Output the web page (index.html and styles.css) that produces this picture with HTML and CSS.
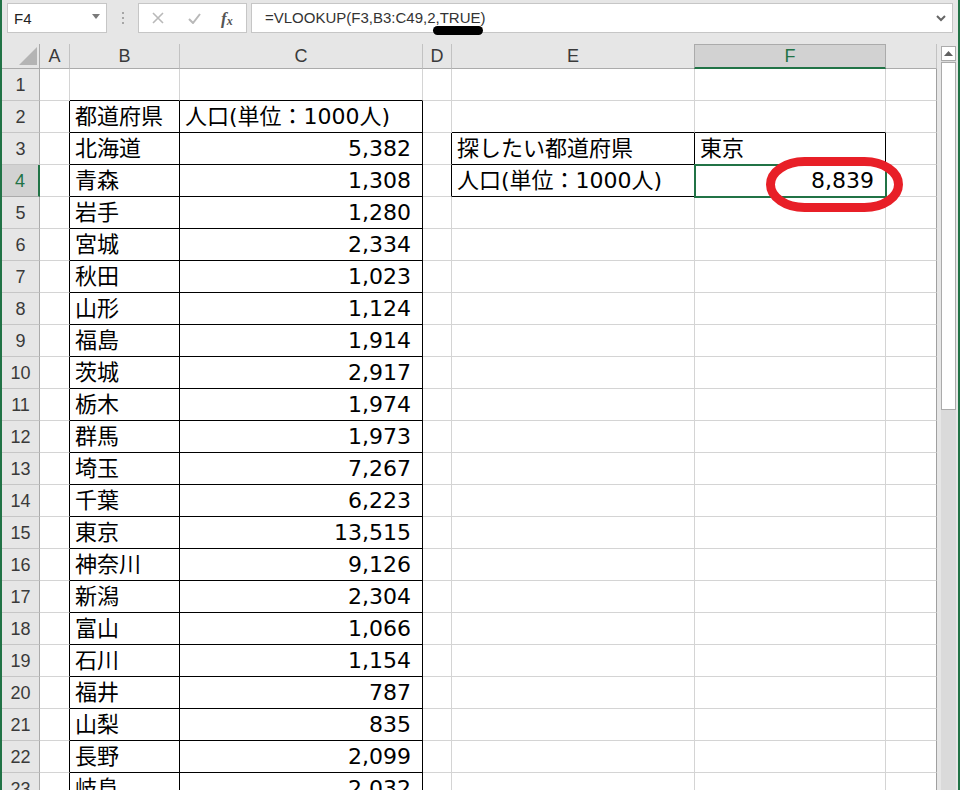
FILE: index.html
```html
<!DOCTYPE html>
<html lang="ja">
<head>
<meta charset="utf-8">
<title>VLOOKUP</title>
<link rel="stylesheet" href="styles.css">
</head>
<body>
<div class="app">
  <div class="topbar">
    <div class="namebox"><span class="nb-text">F4</span><svg class="nb-arrow" width="8" height="5" viewBox="0 0 8 5"><path d="M0 0h8L4 5z" fill="#7a7a7a"/></svg></div>
    <div class="dots"><i></i><i></i><i></i></div>
    <div class="fxbox">
      <svg class="ico" width="12" height="12" viewBox="0 0 12 12"><path d="M1 1l10 10M11 1L1 11" stroke="#b9b9b9" stroke-width="1.6"/></svg>
      <svg class="ico" width="13" height="11" viewBox="0 0 13 11"><path d="M1 6l4 4 7-9" stroke="#b9b9b9" stroke-width="2" fill="none"/></svg>
      <span class="fx">f<sub>x</sub></span>
    </div>
    <div class="formula"><span class="ftext">=VLOOKUP(F3,B3:C49,2,TRUE)</span><svg class="chev" width="10" height="7" viewBox="0 0 10 7"><path d="M1 1l4 4 4-4" stroke="#666" stroke-width="2" fill="none"/></svg></div>
  </div>
  <div class="sheet">
    <div class="grid">
      <div class="corner"><svg width="18" height="18" viewBox="0 0 18 18"><path d="M18 0V18H0z" fill="#b4b4b4"/></svg></div>
      <div class="ch">A</div><div class="ch">B</div><div class="ch">C</div><div class="ch">D</div><div class="ch">E</div><div class="ch sel">F</div><div class="ch"></div>

      <div class="rh">1</div><div class="c"></div><div class="c kb"></div><div class="c kb"></div><div class="c"></div><div class="c"></div><div class="c"></div><div class="c g"></div>
      <div class="rh">2</div><div class="c kr"></div><div class="c kr kb">都道府県</div><div class="c kr kb">人口(単位：1000人)</div><div class="c"></div><div class="c kb"></div><div class="c kb"></div><div class="c g"></div>
      <div class="rh">3</div><div class="c kr"></div><div class="c kr kb">北海道</div><div class="c kr kb num">5,382</div><div class="c kr"></div><div class="c kr kb">探したい都道府県</div><div class="c kr kb">東京</div><div class="c g"></div>
      <div class="rh rsel">4</div><div class="c kr"></div><div class="c kr kb">青森</div><div class="c kr kb num">1,308</div><div class="c kr"></div><div class="c kr kb">人口(単位：1000人)</div><div class="c kr kb num active">8,839<span class="selbox"></span></div><div class="c g"></div>
      <div class="rh">5</div><div class="c kr"></div><div class="c kr kb">岩手</div><div class="c kr kb num">1,280</div><div class="c"></div><div class="c"></div><div class="c"></div><div class="c g"></div>
      <div class="rh">6</div><div class="c kr"></div><div class="c kr kb">宮城</div><div class="c kr kb num">2,334</div><div class="c"></div><div class="c"></div><div class="c"></div><div class="c g"></div>
      <div class="rh">7</div><div class="c kr"></div><div class="c kr kb">秋田</div><div class="c kr kb num">1,023</div><div class="c"></div><div class="c"></div><div class="c"></div><div class="c g"></div>
      <div class="rh">8</div><div class="c kr"></div><div class="c kr kb">山形</div><div class="c kr kb num">1,124</div><div class="c"></div><div class="c"></div><div class="c"></div><div class="c g"></div>
      <div class="rh">9</div><div class="c kr"></div><div class="c kr kb">福島</div><div class="c kr kb num">1,914</div><div class="c"></div><div class="c"></div><div class="c"></div><div class="c g"></div>
      <div class="rh">10</div><div class="c kr"></div><div class="c kr kb">茨城</div><div class="c kr kb num">2,917</div><div class="c"></div><div class="c"></div><div class="c"></div><div class="c g"></div>
      <div class="rh">11</div><div class="c kr"></div><div class="c kr kb">栃木</div><div class="c kr kb num">1,974</div><div class="c"></div><div class="c"></div><div class="c"></div><div class="c g"></div>
      <div class="rh">12</div><div class="c kr"></div><div class="c kr kb">群馬</div><div class="c kr kb num">1,973</div><div class="c"></div><div class="c"></div><div class="c"></div><div class="c g"></div>
      <div class="rh">13</div><div class="c kr"></div><div class="c kr kb">埼玉</div><div class="c kr kb num">7,267</div><div class="c"></div><div class="c"></div><div class="c"></div><div class="c g"></div>
      <div class="rh">14</div><div class="c kr"></div><div class="c kr kb">千葉</div><div class="c kr kb num">6,223</div><div class="c"></div><div class="c"></div><div class="c"></div><div class="c g"></div>
      <div class="rh">15</div><div class="c kr"></div><div class="c kr kb">東京</div><div class="c kr kb num">13,515</div><div class="c"></div><div class="c"></div><div class="c"></div><div class="c g"></div>
      <div class="rh">16</div><div class="c kr"></div><div class="c kr kb">神奈川</div><div class="c kr kb num">9,126</div><div class="c"></div><div class="c"></div><div class="c"></div><div class="c g"></div>
      <div class="rh">17</div><div class="c kr"></div><div class="c kr kb">新潟</div><div class="c kr kb num">2,304</div><div class="c"></div><div class="c"></div><div class="c"></div><div class="c g"></div>
      <div class="rh">18</div><div class="c kr"></div><div class="c kr kb">富山</div><div class="c kr kb num">1,066</div><div class="c"></div><div class="c"></div><div class="c"></div><div class="c g"></div>
      <div class="rh">19</div><div class="c kr"></div><div class="c kr kb">石川</div><div class="c kr kb num">1,154</div><div class="c"></div><div class="c"></div><div class="c"></div><div class="c g"></div>
      <div class="rh">20</div><div class="c kr"></div><div class="c kr kb">福井</div><div class="c kr kb num">787</div><div class="c"></div><div class="c"></div><div class="c"></div><div class="c g"></div>
      <div class="rh">21</div><div class="c kr"></div><div class="c kr kb">山梨</div><div class="c kr kb num">835</div><div class="c"></div><div class="c"></div><div class="c"></div><div class="c g"></div>
      <div class="rh">22</div><div class="c kr"></div><div class="c kr kb">長野</div><div class="c kr kb num">2,099</div><div class="c"></div><div class="c"></div><div class="c"></div><div class="c g"></div>
      <div class="rh">23</div><div class="c kr"></div><div class="c kr kb">岐阜</div><div class="c kr kb num">2,032</div><div class="c"></div><div class="c"></div><div class="c"></div><div class="c g"></div>
    </div>
    <div class="vscroll">
      <div class="track">
        <div class="sbtn"><svg width="9" height="5" viewBox="0 0 9 5"><path d="M0 5L4.5 0 9 5z" fill="#606060"/></svg></div>
        <div class="thumb"></div>
      </div>
    </div>
  </div>
  <div class="blob"></div>
  <svg class="ring" width="137" height="55" viewBox="0 0 137 55"><rect x="4.5" y="4.5" width="128" height="46" rx="34" ry="23" fill="none" stroke="#e81f27" stroke-width="9"/></svg>
</div>
</body>
</html>
```

FILE: styles.css
```css
html, body {
  margin: 0;
  padding: 0;
}
body {
  width: 960px;
  height: 790px;
  overflow: hidden;
  background: #e6e6e6;
}
.app {
  position: relative;
  width: 960px;
  height: 790px;
  box-sizing: border-box;
  border-left: 2px solid #217346;
  border-right: 2px solid #217346;
  background: #e6e6e6;
  overflow: hidden;
}
.topbar {
  height: 44px;
  display: flex;
  align-items: flex-start;
  padding-top: 3px;
  box-sizing: border-box;
  font-family: "Liberation Sans", Arial, sans-serif;
}
.namebox {
  margin-left: 5px;
  width: 100px;
  height: 30px;
  box-sizing: border-box;
  background: #fff;
  border: 1px solid #c6c6c6;
  display: flex;
  align-items: center;
  justify-content: space-between;
  padding: 0 6px 0 6px;
}
.nb-text {
  font-size: 15px;
  color: #222;
}
.nb-arrow {
  margin-bottom: 3px;
}
.dots {
  width: 31px;
  height: 30px;
  display: flex;
  flex-direction: column;
  align-items: center;
  justify-content: center;
  gap: 3px;
}
.dots i {
  display: block;
  width: 2px;
  height: 2px;
  background: #a6a6a6;
}
.fxbox {
  width: 109px;
  height: 30px;
  box-sizing: border-box;
  background: #fff;
  border: 1px solid #c6c6c6;
  display: flex;
  align-items: center;
  padding-left: 13px;
  gap: 0;
}
.fxbox .ico:first-child {
  margin-right: 24px;
}
.fxbox .ico:nth-child(2) {
  margin-right: 20px;
}
.fx {
  font-family: "Liberation Serif", serif;
  font-style: italic;
  font-weight: bold;
  font-size: 17px;
  color: #555;
  line-height: 1;
}
.fx sub {
  font-size: 12px;
  vertical-align: -1px;
}
.formula {
  margin-left: 4px;
  width: 702px;
  height: 30px;
  box-sizing: border-box;
  background: #fff;
  border: 1px solid #c6c6c6;
  display: flex;
  align-items: center;
  justify-content: space-between;
  padding: 0 6px 0 13px;
}
.ftext {
  font-size: 15px;
  color: #333;
  margin-top: -1px;
}
.sheet {
  display: flex;
  height: 746px;
}
.grid {
  width: 935px;
  display: grid;
  grid-template-columns: 38px 30px 110px 243px 29px 243px 191px 51px;
  grid-template-rows: 25px;
  grid-auto-rows: 32px;
  background: #fff;
  overflow: hidden;
  font-family: "DejaVu Sans", "Noto Sans CJK JP", sans-serif;
  font-size: 22px;
  color: #000;
}
.corner {
  background: #e6e6e6;
  border-right: 1px solid #ababab;
  border-bottom: 1px solid #ababab;
  box-sizing: border-box;
  display: flex;
  align-items: flex-end;
  justify-content: flex-end;
  padding: 0 2px 3px 0;
}
.ch {
  background: #e6e6e6;
  box-sizing: border-box;
  border-right: 1px solid #c2c2c2;
  border-bottom: 1px solid #ababab;
  font-family: "Liberation Sans", Arial, sans-serif;
  font-size: 18px;
  color: #3a3a3a;
  text-align: center;
  line-height: 25px;
}
.ch:last-child {
  border-right-color: #ababab;
}
.ch.sel {
  background: #d2d2d2;
  color: #217346;
  border-top: 1px solid #ababab;
  border-left: 1px solid #ababab;
  border-right-color: #ababab;
  border-bottom: 2px solid #217346;
  line-height: 22px;
  margin-left: -1px;
}
.rh {
  background: #e6e6e6;
  box-sizing: border-box;
  border-right: 1px solid #ababab;
  border-bottom: 1px solid #c6c6c6;
  font-family: "Liberation Sans", Arial, sans-serif;
  font-size: 18px;
  color: #3a3a3a;
  text-align: center;
  line-height: 32px;
}
.rh.rsel {
  background: #d2d2d2;
  color: #217346;
  border-right: 2px solid #217346;
  border-bottom-color: #ababab;
}
.c {
  box-sizing: border-box;
  border-right: 1px solid #d4d4d4;
  border-bottom: 1px solid #d4d4d4;
  line-height: 32px;
  padding-left: 5px;
  white-space: nowrap;
  overflow: visible;
}
.c.g {
  border-right-color: #a0a0a0;
}
.c.kr {
  border-right-color: #000;
}
.c.kb {
  border-bottom-color: #000;
}
.c.num {
  text-align: right;
  padding-right: 11px;
}
.c.active {
  position: relative;
}
.selbox {
  position: absolute;
  left: -1px;
  top: -1px;
  right: -2px;
  bottom: -2px;
  border: 2px solid #217346;
}
.vscroll {
  width: 21px;
  background: #e6e6e6;
  padding: 2px 0 0 4px;
  box-sizing: border-box;
}
.track {
  width: 15px;
  height: 100%;
  background: #dadada;
  display: flex;
  flex-direction: column;
}
.sbtn {
  height: 15px;
  box-sizing: border-box;
  background: #fff;
  border: 1px solid #ababab;
  display: flex;
  align-items: center;
  justify-content: center;
}
.thumb {
  margin-top: 1px;
  height: 348px;
  box-sizing: border-box;
  background: #fff;
  border: 1px solid #ababab;
}
.blob {
  position: absolute;
  left: 431px;
  top: 26px;
  width: 50px;
  height: 9px;
  border-radius: 5px;
  background: #000;
}
.ring {
  position: absolute;
  left: 764px;
  top: 157px;
}
```
